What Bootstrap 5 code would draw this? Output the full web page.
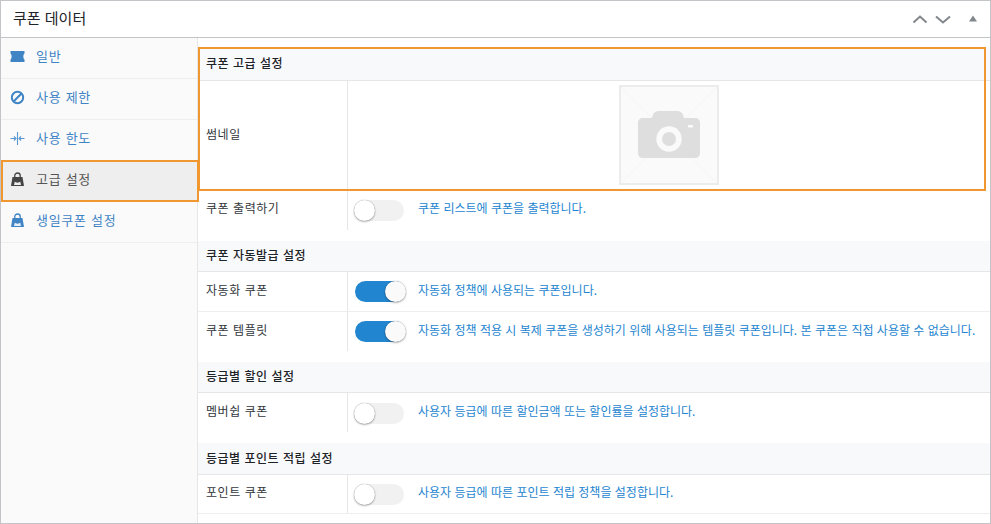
<!DOCTYPE html>
<html lang="ko">
<head>
<meta charset="utf-8">
<title>쿠폰 데이터</title>
<link href="https://cdn.jsdelivr.net/npm/bootstrap@5.3.0/dist/css/bootstrap.min.css" rel="stylesheet">
<style>
html,body{margin:0;height:524px;overflow:hidden;background:#fff}
body{font-family:"Noto Sans CJK KR","Liberation Sans",sans-serif;font-size:12px;color:#32373c}
.shell{width:991px;height:524px;border:1px solid #c3c4c7;position:relative;overflow:hidden}
.head{height:37px;border-bottom:1px solid #c3c4c7;padding:0 12px}
.head-title{font-size:15px;color:#1d2327;line-height:1;padding-bottom:4px}
.panel{height:485px}
.side{width:197px;flex:none;background:#fafafa;border-right:1px solid #e6e6e6}
.side-item{height:41px;padding-left:9px;border-bottom:1px solid #eee;color:#3f84c5;font-size:13px;gap:11px;letter-spacing:.7px}
.side-item span{padding-bottom:4px}
.side-item.on{background:#eee;color:#555}
.side-ico{width:15px;height:15px;flex:none;margin-bottom:3px}
.main{flex:1;min-width:0;padding-top:10px}
.sec{background:#f8f9fb;border-bottom:1px solid #e6e6e6;height:33px;padding:0 0 2px 8px;font-size:12px;font-weight:500;color:#1d2327;letter-spacing:.5px}
.sec.s2{height:31px;margin-top:11px}
.sec.s3{height:32px}
.line{display:flex;border-bottom:1px solid #eee}
.line.plain{border-bottom:0}
.lab{width:150px;flex:none;padding:0 0 4px 8px;border-right:1px solid #e6e6e6;display:flex;align-items:center;color:#32373c;font-size:12px;letter-spacing:.55px}
.val{flex:1;display:flex;align-items:center;padding-left:6px;min-width:0}
.val.pic{padding:4px 0 0;align-items:flex-start}
.h109{height:109px}.h40{height:40px}.h39{height:39px}
.note{color:#1e85d0;font-size:12px;margin-left:14px;white-space:nowrap;padding-bottom:4px}
.tog{width:50px;height:21px;border-radius:11px;background:#f1f1f1;position:relative;flex:none;margin-top:1px}
.tog::after{content:"";position:absolute;left:0;top:0;width:21px;height:21px;border-radius:50%;background:#fff;box-shadow:0 0 1px rgba(0,0,0,.4),0 1px 2px rgba(0,0,0,.3)}
.tog.act{background:#2185d0;margin-left:1px;margin-right:-1px;margin-top:0}
.tog.act::after{left:auto;right:-1px;background:#fafafa}
.thumb{width:100px;height:100px;display:block;margin:0 auto}
.hl{position:absolute;border:2px solid #f0972f;pointer-events:none}
.hl-a{left:197px;top:46px;width:788px;height:144px}
.hl-b{left:0;top:159px;width:198px;height:42px}
</style>
</head>
<body>
<div class="shell">
  <div class="head d-flex align-items-center justify-content-between">
    <div class="head-title">쿠폰 데이터</div>
    <div class="d-flex align-items-center">
      <svg width="66" height="14" viewBox="0 0 66 14" fill="none" stroke="#82878c" stroke-width="2">
        <path d="M1.500 10.500 8 4.500 14.500 10.500"/><path d="M24 4.500 31 10.500 38 4.500"/>
        <path d="M57 9.500h8l-4-6z" fill="#82878c" stroke="none"/>
      </svg>
    </div>
  </div>
  <div class="panel d-flex">
    <nav class="side">
      <div class="side-item d-flex align-items-center">
        <svg class="side-ico" viewBox="0 0 15 15" fill="#3f84c5"><path d="M.5 2h14v2.500c-1.500.8-1.500 5.200 0 6V13H.5v-2.500c1.500-.8 1.500-5.200 0-6z"/></svg><span>일반</span></div>
      <div class="side-item d-flex align-items-center">
        <svg class="side-ico" viewBox="0 0 15 15" fill="none" stroke="#3f84c5" stroke-width="2"><circle cx="7.500" cy="7.500" r="5.700"/><path d="M3.800 11.200 11.200 3.800"/></svg><span>사용 제한</span></div>
      <div class="side-item d-flex align-items-center">
        <svg class="side-ico" viewBox="0 0 15 15" fill="none" stroke="#5a96d0" stroke-width="1.100"><path d="M7.500 1v13M.5 7.500h5M9.500 7.500h5"/><path d="M4 5.500 6 7.500 4 9.500M11 5.500 9 7.500 11 9.500"/></svg><span>사용 한도</span></div>
      <div class="side-item on d-flex align-items-center">
        <svg class="side-ico" viewBox="0 0 15 15"><path fill="#444" d="M2.500 5h10l1.500 9H1z"/><path fill="none" stroke="#444" stroke-width="1.300" d="M4.800 6V3.500C4.800 2 6 1 7.500 1s2.700 1 2.700 2.500V6"/><path fill="#eee" d="M4.800 9.500c.9 1.500 4.500 1.500 5.400 0l.8 3.500H4z"/></svg><span>고급 설정</span></div>
      <div class="side-item d-flex align-items-center">
        <svg class="side-ico" viewBox="0 0 15 15"><path fill="#3f84c5" d="M2.500 5h10l1.500 9H1z"/><path fill="none" stroke="#3f84c5" stroke-width="1.300" d="M4.800 6V3.500C4.800 2 6 1 7.500 1s2.700 1 2.700 2.500V6"/><path fill="#e4eef8" d="M4.800 9.500c.9 1.500 4.500 1.500 5.400 0l.8 3.500H4z"/></svg><span>생일쿠폰 설정</span></div>
    </nav>
    <main class="main">
      <div class="sec d-flex align-items-center">쿠폰 고급 설정</div>
      <div class="line plain h109">
        <div class="lab">썸네일</div>
        <div class="val pic">
          <svg class="thumb" viewBox="0 0 100 100">
            <rect x="1" y="1" width="98" height="98" fill="#fafafa" stroke="#ececec" stroke-width="2"/>
            <path d="M2 2 98 98M98 2 2 98" stroke="#f5f5f5" stroke-width="1"/>
            <path fill="#dedede" d="M24 33h9c1-5 3-7 7-7h18c4 0 6 2 7 7h11c3 0 5 2 5 5v30c0 3-2 5-5 5H24c-3 0-5-2-5-5V38c0-3 2-5 5-5z"/>
            <circle cx="50" cy="54" r="12.700" fill="#fafafa"/><circle cx="50" cy="54" r="7" fill="#dedede"/>
            <rect x="69" y="40" width="5" height="2.500" fill="#fafafa"/>
          </svg>
        </div>
      </div>
      <div class="line plain h40">
        <div class="lab">쿠폰 출력하기</div>
        <div class="val"><span class="tog"></span><span class="note">쿠폰 리스트에 쿠폰을 출력합니다.</span></div>
      </div>
      <div class="sec s2 d-flex align-items-center">쿠폰 자동발급 설정</div>
      <div class="line h40">
        <div class="lab">자동화 쿠폰</div>
        <div class="val"><span class="tog act"></span><span class="note">자동화 정책에 사용되는 쿠폰입니다.</span></div>
      </div>
      <div class="line plain h39">
        <div class="lab">쿠폰 템플릿</div>
        <div class="val"><span class="tog act"></span><span class="note">자동화 정책 적용 시 복제 쿠폰을 생성하기 위해 사용되는 템플릿 쿠폰입니다. 본 쿠폰은 직접 사용할 수 없습니다.</span></div>
      </div>
      <div class="sec s2 d-flex align-items-center">등급별 할인 설정</div>
      <div class="line plain h39">
        <div class="lab">멤버쉽 쿠폰</div>
        <div class="val"><span class="tog"></span><span class="note">사용자 등급에 따른 할인금액 또는 할인률을 설정합니다.</span></div>
      </div>
      <div class="sec s2 s3 d-flex align-items-center">등급별 포인트 적립 설정</div>
      <div class="line h39">
        <div class="lab">포인트 쿠폰</div>
        <div class="val"><span class="tog"></span><span class="note">사용자 등급에 따른 포인트 적립 정책을 설정합니다.</span></div>
      </div>
    </main>
  </div>
  <div class="hl hl-a"></div>
  <div class="hl hl-b"></div>
</div>
<script src="https://cdn.jsdelivr.net/npm/bootstrap@5.3.0/dist/js/bootstrap.bundle.min.js"></script>
</body>
</html>
